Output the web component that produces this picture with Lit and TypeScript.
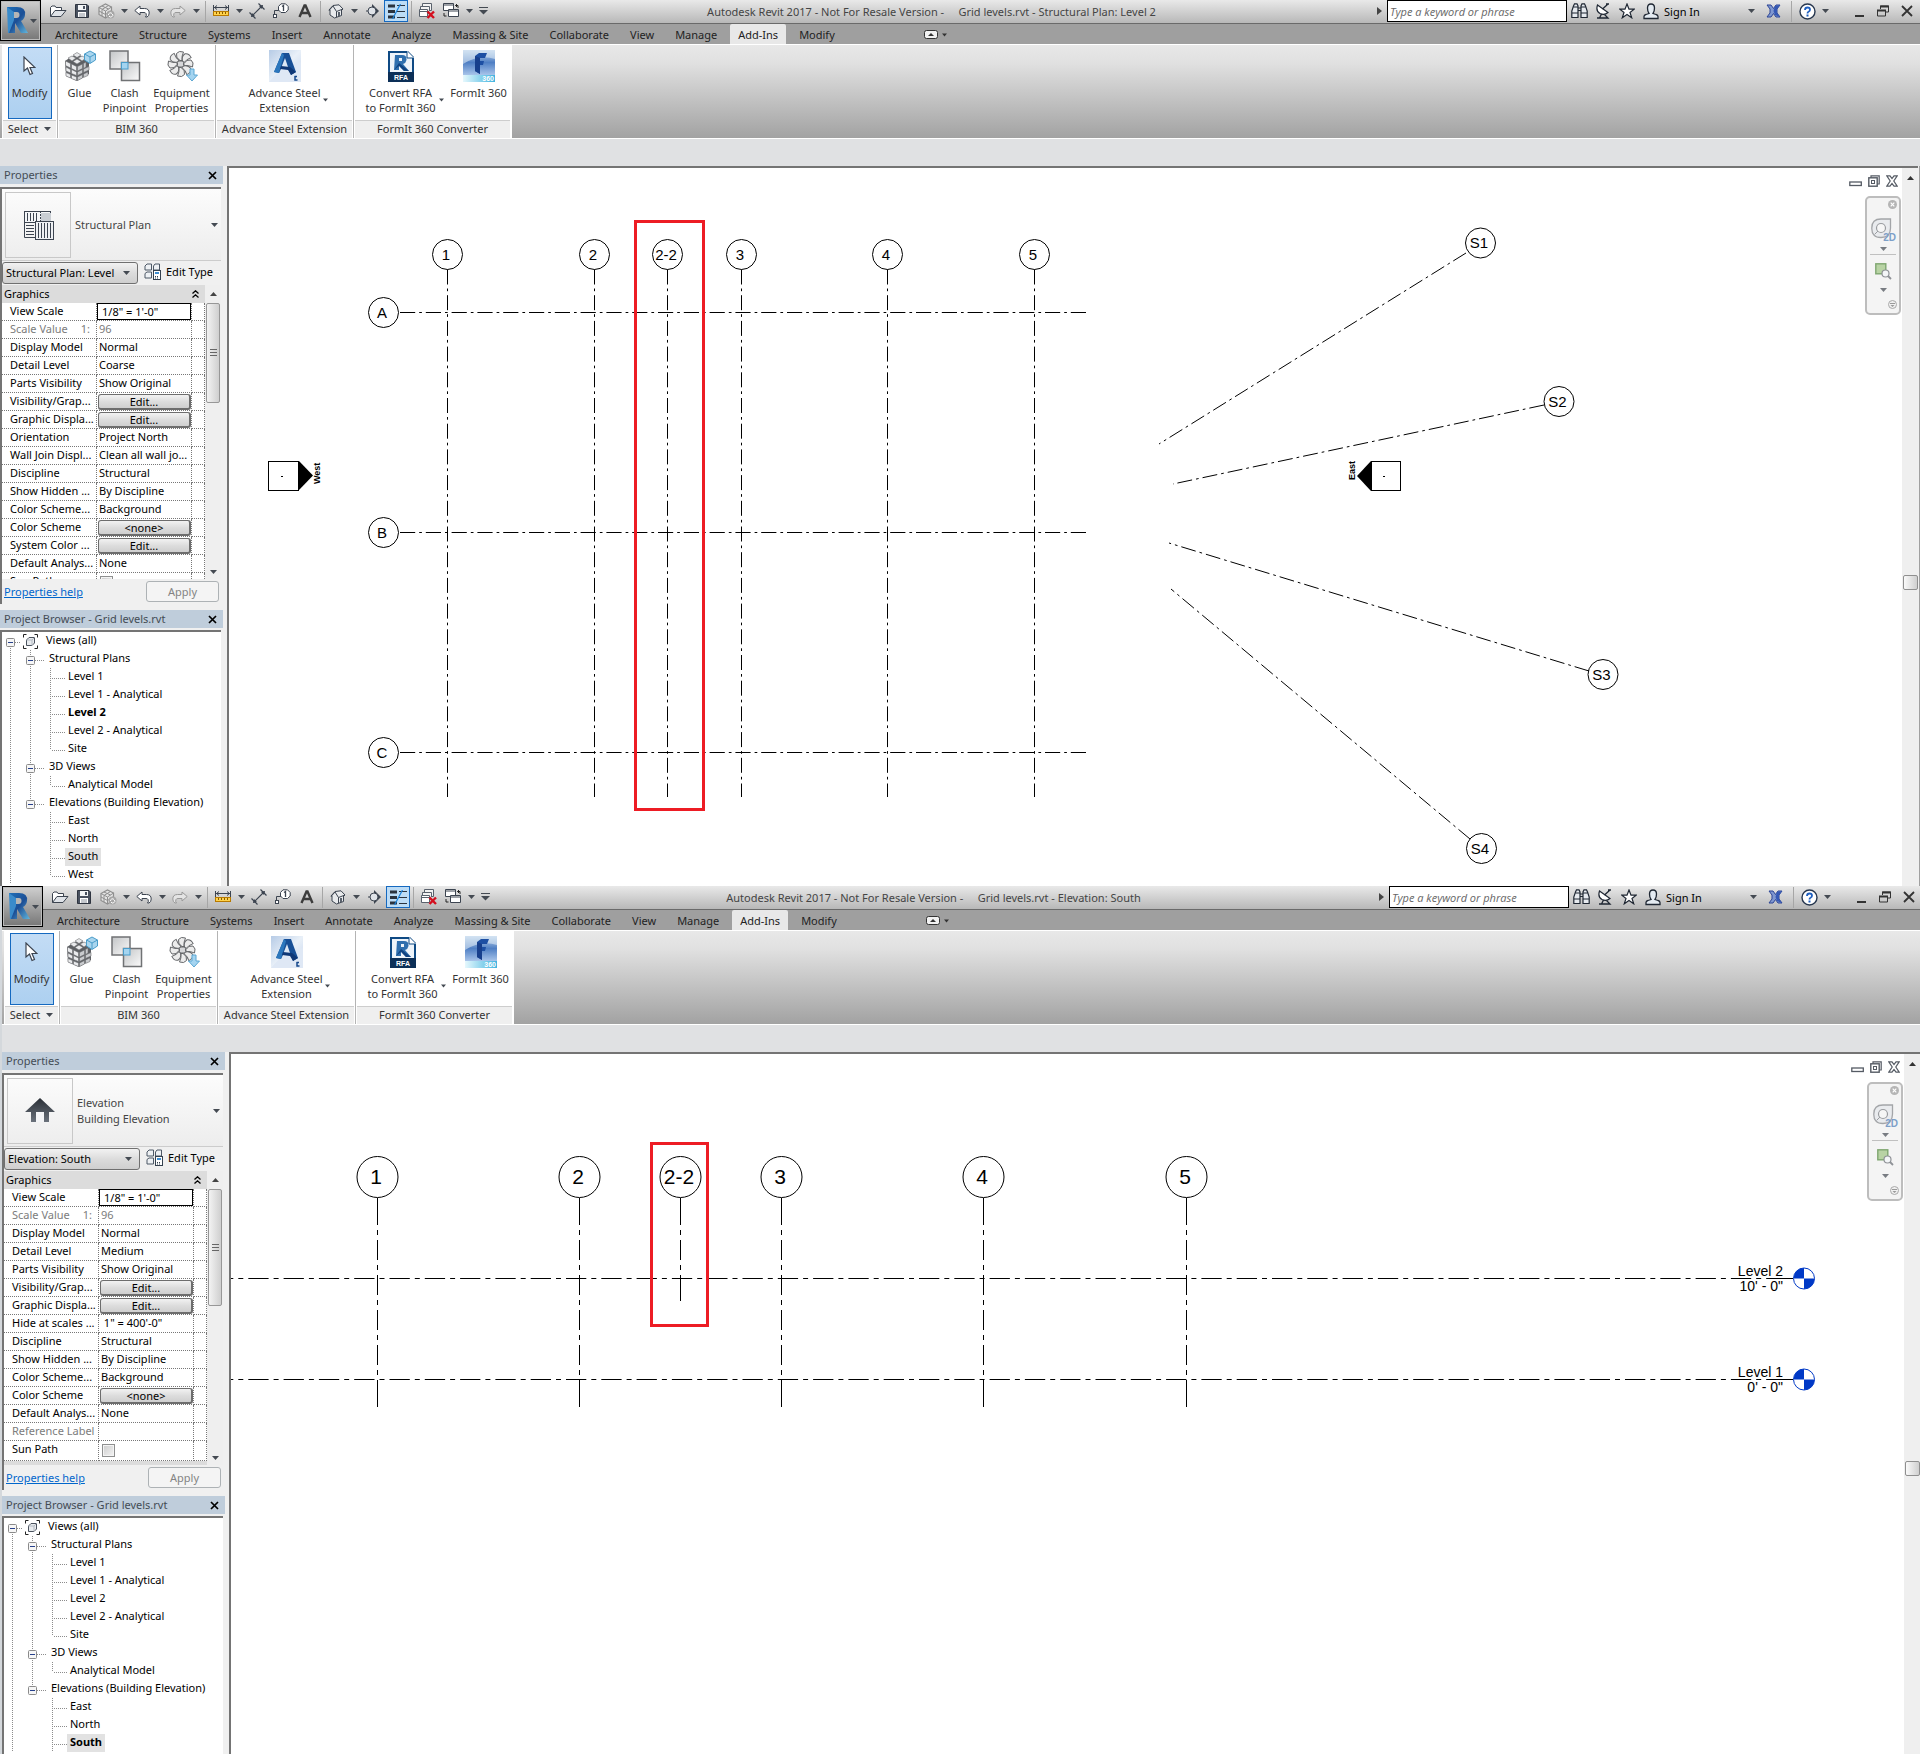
import { LitElement, html, svg, css, nothing, type TemplateResult } from "lit";
import { customElement, property } from "lit/decorators.js";
import { classMap } from "lit/directives/class-map.js";

type Row = { name: string; value?: string; kind?: "text" | "field" | "button" | "check"; dim?: boolean; note?: string };
type Node = { label: string; level: number; current?: boolean; selected?: boolean; last?: boolean };

/* ---------- icons ---------- */

const icon = (w: number, h: number, body: unknown) =>
  html`<svg width=${w} height=${h} viewBox="0 0 ${w} ${h}" aria-hidden="true">${body}</svg>`;

const caret = () => icon(7, 4, svg`<path d="M0 0H7L3.5 4Z" fill="#444a52"/>`);

const icons: Record<string, () => TemplateResult> = {
  open: () => icon(18, 14, svg`<path d="M1.5 12.500V3.500L3 2H6L7 3.500H12.500V6" fill="#fff" stroke="#3c4450"/><path d="M1.500 12.500L6 6.500H17L12 12.500Z" fill="#dfe3e8" stroke="#3c4450"/>`),
  save: () => icon(14, 14, svg`<path d="M.5.500H12L13.500 2V13.500H.500Z" fill="#4a5260" stroke="#2f3540"/><rect x="3" y="1" width="8" height="5" fill="#f4f6f8"/><rect x="8" y="2" width="2" height="3" fill="#4a5260"/><rect x="3" y="8" width="8" height="5" fill="#fff"/><path d="M4 10H10M4 12H10" stroke="#8a919c"/>`),
  sync: () => icon(17, 16, svg`<path d="M1 4.500L7.500 1L13.500 4V11L7.500 15L1 11.500Z" fill="#e4e4e4" stroke="#8f8f8f" stroke-width="1.200"/><path d="M1 4.500L7.500 8L13.500 4M7.500 8V15M4 3L10.500 6M10.500 2.500L4 6.500V13M1 8L7.500 11.500L13.500 7.500" fill="none" stroke="#8f8f8f"/><circle cx="12.500" cy="11.500" r="4" fill="#a6a6a6"/><path d="M10.500 12A2 2 0 0 1 14 10.500M14.500 11A2 2 0 0 1 11 13" fill="none" stroke="#fff"/>`),
  undo: () => icon(16, 13, svg`<path d="M.8 5.500L6 1V3.500H10.500Q15.200 3.500 15.200 8Q15.200 11 13 12H11.500Q13 10.500 12 8.500Q11.500 7.500 10 7.500H6V10Z" fill="#fff" stroke="#3c4450"/>`),
  redo: () => icon(16, 13, svg`<path d="M15.200 5.500L10 1V3.500H5.500Q.8 3.500 .8 8Q.8 11 3 12H4.500Q3 10.500 4 8.500Q4.500 7.500 6 7.500H10V10Z" fill="#e4e4e4" stroke="#999"/>`),
  measure: () => icon(16, 12, svg`<path d="M.5 0V6M15.500 0V6M1 2.500H15M4 .5L1.500 2.500L4 4.500M12 .5L14.500 2.500L12 4.500" fill="none" stroke="#3c4450"/><rect x=".5" y="6.500" width="15" height="4" fill="#ffd24a" stroke="#b87a00"/><path d="M3.500 7V9M6.500 7V9M9.500 7V9M12.500 7V9" stroke="#8a5a00"/>`),
  dim: () => icon(16, 16, svg`<path d="M2.500 13.500L13.500 2.500M9.500 .5L15.500 6.500M.5 9.500L6.500 15.500" fill="none" stroke="#3c4450" stroke-width="1.200"/><path d="M14 2L10 3L13 6ZM2 14L3 10L6 13Z" fill="#3c4450"/>`),
  tag: () => icon(16, 16, svg`<path d="M1.500 13V7.500H6" fill="none" stroke="#3c4450"/><rect x=".5" y="11.500" width="3" height="3" fill="#fff" stroke="#3c4450"/><path d="M8 .8H12.500L15.200 3.500V7L12.500 9.500H8L5.500 7V3.500Z" fill="#fff" stroke="#3c4450"/><path d="M9 3.500L10.500 2.500V8" fill="none" stroke="#3c4450" stroke-width="1.300"/>`),
  text: () => icon(14, 14, svg`<path d="M1.500 13L6.500 1.500H7.500L12.500 13M3.500 9H10.500" fill="none" stroke="#3c3c3c" stroke-width="2.400"/>`),
  house: () => icon(16, 15, svg`<path d="M1 6L5 1.500L11 .8L15 5L13.500 6V11.500L6.500 14L2 11V6Z" fill="#e8eaec" stroke="#3c4450"/><path d="M1 6.500L5 2L8.500 7.500L15 5M8.500 7.500V13" fill="none" stroke="#3c4450"/><rect x="10" y="8" width="2" height="4" fill="#59616c"/>`),
  section: () => icon(13, 14, svg`<path d="M6 0L13 7L6 14Z" fill="#3c4450"/><circle cx="6" cy="7" r="4" fill="#dfe3e8" stroke="#3c4450"/><path d="M0 7H2" stroke="#3c4450"/>`),
  thin: () => icon(17, 15, svg`<path d="M0 2H7M0 7.500H7M0 13H7" stroke="#2b333e" stroke-width="3"/><path d="M9 1.500H17M9 7.500H17M9 13.500H17" stroke="#2b333e"/><path d="M12.500 0L4.500 15" stroke="#1a82dc" stroke-width="1.200"/>`),
  hidden: () => icon(17, 16, svg`<path d="M3.500 4V.5H12.500V7.500H10M1.500 7V3.500H10.500V7" fill="#f2f2f2" stroke="#59616c"/><path d="M.5 6.500H8.500V13.500H.5ZM.5 8.500H8.500" fill="#fff" stroke="#59616c"/><path d="M8.500 8.500L15 15M15 8.500L8.500 15" stroke="#d40f1e" stroke-width="2.400"/>`),
  switch: () => icon(17, 16, svg`<path d="M.5.500H10.500V7.500H.5ZM.5 2H10.500" fill="#fff" stroke="#3c4450"/><path d="M5.500 6.500H15.500V13.500H5.500ZM5.500 8H15.500" fill="#fff" stroke="#3c4450"/><path d="M12.500 2.500H15V5M14 1L12.500 2.500L14 4M1 10V13H3.500" fill="none" stroke="#222"/>`),
  custom: () => icon(9, 8, svg`<path d="M0 .5H9" stroke="#444a52"/><path d="M0 3H9L4.500 7.500Z" fill="#444a52"/>`),
  binoculars: () => icon(17, 16, svg`<path d="M2.500 3L3.500.8H6L7 3V14.500H.8V8ZM14.500 3L13.500.8H11L10 3V14.500H16.200V8Z" fill="#e6eaef" stroke="#1f2733" stroke-width="1.200"/><path d="M1 10H7M10 10H16M7 5H10M7 7.500H10M2.500 4H7M10 4H14.500" stroke="#1f2733"/>`),
  dish: () => icon(14, 16, svg`<path d="M1.500 2Q-.5 8 4 10.500Q8.500 12.500 12 9.500Z" fill="#fff" stroke="#1f2733" stroke-width="1.200"/><path d="M6.500 6L11.500 1.500M10 1H13M3.500 15L5.500 11M1 15H12L8.500 11.500" fill="none" stroke="#1f2733" stroke-width="1.300"/>`),
  star: () => icon(16, 16, svg`<path d="M8 1L10 6.200H15.200L11 9.500L12.700 14.800L8 11.600L3.300 14.800L5 9.500L.8 6.200H6Z" fill="#fff" stroke="#1f2733" stroke-width="1.200"/>`),
  person: () => icon(16, 17, svg`<path d="M1 15.500V13.500Q1 12 3 11.500L6 10.500Q4.500 8.500 4.500 5Q4.500 1 8 1T11.500 5Q11.500 8.500 10 10.500L13 11.500Q15 12 15 13.500V15.500Z" fill="#e4ebf2" stroke="#1f2733" stroke-width="1.300"/>`),
  exchange: () => icon(15, 14, svg`<path d="M1 1H5L7.500 4.500L10 1H14L11 5V9L14 13H10L7.500 9.500L5 13H1L4 9V5Z" fill="#7f97d0" stroke="#2c4596"/><path d="M9 2L14 1L11 5V9L14 13L9 11L7.500 7Z" fill="#3558b4"/>`),
  help: () => icon(17, 17, svg`<circle cx="8.500" cy="8.500" r="7.500" fill="#fff" stroke="#27374f" stroke-width="1.400"/><path d="M6 7Q6 4.500 8.500 4.500T11 6.800Q11 8 9.500 8.800Q8.500 9.300 8.500 10.500" fill="none" stroke="#1f5fc0" stroke-width="1.800"/><rect x="7.500" y="11.500" width="2" height="2" fill="#1f5fc0"/>`),
  min: () => icon(9, 14, svg`<rect y="11" width="9" height="2" fill="#333"/>`),
  restore: () => icon(12, 12, svg`<path d="M3.500 4V1H11.500V7H8.500" fill="none" stroke="#333"/><path d="M3 1.500H12M0 5.500H9" stroke="#333" stroke-width="2"/><path d="M.5 5V11H8.500V5" fill="none" stroke="#333"/>`),
  close: () => icon(12, 12, svg`<path d="M1 1L11 11M11 1L1 11" stroke="#333" stroke-width="1.800"/>`),
  x: () => icon(9, 9, svg`<path d="M1 1L8 8M8 1L1 8" stroke="#000" stroke-width="1.700"/>`),
  cursor: () => icon(13, 20, svg`<path d="M1 1V15L4.500 12L7 18.500L9.500 17.500L7 11.500H12Z" fill="#fff" stroke="#3c4450" stroke-width="1.200"/>`),
  glue: () => icon(32, 32, svg`
    <path d="M1 11L7 7L13 4L19 7L25 12V24L13 31L2 26Z" fill="#5d5f63"/>
    <g fill="#e9eaec" stroke="#6e7074" stroke-width=".6">
      <path d="M9 5L13 2.500L17 5L13 7.500ZM4 8L8 6L12 8L8 11ZM14 8L18 6L22 8L18 11ZM9 11.500L13 9L17 11.500L13 14Z"/>
      <path d="M1.500 11L6.500 13.500V18L1.500 15.500ZM7.500 14L12.500 16.500V21L7.500 18.500ZM2 17L6.500 19.500V23L2 21ZM7.500 19.500L12.500 22V25.500L7.500 23.500ZM2 22.500L6.500 24.500V28L2 26ZM7.500 25L12.500 27V30.500L7.500 28.500Z"/>
      <path d="M13.500 16.500L18.500 14V18.500L13.500 21ZM19.500 13.500L22 12V17L19.500 18.500ZM13.500 22L18.500 19.500V23L13.500 25.500ZM19.500 19L25 16.500V20L19.500 22.500ZM13.500 27L18.500 24.500V28L13.500 30.500ZM19.500 24L24 22V25.500L19.500 27.500Z" fill="#c9cbce"/>
    </g>
    <path d="M20.500 4L26 1L31.500 4V10L26 13.500L20.500 10Z" fill="#a9d5ee" stroke="#4a9cc9"/><path d="M20.500 4L26 7L31.500 4M26 7V13" fill="none" stroke="#4a9cc9"/>`),
  clash: () => icon(32, 32, svg`<defs><linearGradient id="m" x1="0" y1="0" x2="1" y2="1"><stop offset="0" stop-color="#c2c4c6"/><stop offset="1" stop-color="#fbfbfb"/></linearGradient></defs>
    <rect x="1" y="1" width="18" height="18" fill="url(#m)" stroke="#707274" stroke-width="1.500"/><rect x="12.500" y="12.500" width="18" height="18" fill="url(#m)" stroke="#707274" stroke-width="1.500"/><rect x="12.500" y="12.500" width="6.500" height="6.500" fill="#a4d4f0" stroke="#4a9cc9"/>`),
  equip: () => icon(32, 32, svg`<g fill="#ececec" stroke="#66686b" stroke-width="1">${[0, 45, 90, 135, 180, 225, 270, 315].map(
      (a) => svg`<path d="M14 10.500Q9.500 8 10.500 3.500Q13 .2 17.500 2Q15.500 6 16 10.500Z" transform="rotate(${a} 14.500 14)"/>`)}</g>
    <rect x="11.500" y="11" width="6" height="6" rx="1.500" fill="#d6d7d9" stroke="#66686b"/>
    <path d="M24 19H28V25H31.500L26 31L20.500 25H24Z" fill="#a4d4f0" stroke="#5aa6d2"/>`),
  steel: () => icon(32, 32, svg`<defs><linearGradient id="s" x1="0" y1="0" x2="1" y2="1"><stop offset="0" stop-color="#b6cbe6"/><stop offset=".5" stop-color="#e9f0f8"/><stop offset="1" stop-color="#c3d3ec"/></linearGradient></defs>
    <rect width="32" height="32" fill="url(#s)"/><path d="M0 32Q14 14 32 12V32Z" fill="#dfe8f5"/>
    <path d="M5 22L13 3H20L27 22L22 25L20 19H12L10 23Z" fill="#174f96"/><path d="M16 8L12.500 17H19Z" fill="#dce7f4"/><path d="M5 22L13 3L15 5L10 23Z" fill="#2b77bd"/><path d="M12 16L21 17L27 22L22 25L19 20L11 19Z" fill="#0f3877"/>
    <path d="M25.500 26.500H28M26 26V30H28.500" fill="none" stroke="#16488c" stroke-width="1.500"/>`),
  rfa: () => icon(26, 31, svg`<path d="M0 0H20L26 6V31H0Z" fill="#0f4a84"/><path d="M2 2H19L24 7V21H2Z" fill="#eef4fa"/><path d="M19 0L26 7H19Z" fill="#fff"/><path d="M19 1V7H25" fill="none" stroke="#0f4a84"/>
    <path d="M7 4H14Q19 4 18.500 9Q18 12 15 13L21 20H16L11 14V19H6Z" fill="#2f6fae"/><path d="M11 7H14V10H11Z" fill="#eef4fa"/><path d="M6 19L11 12L21 20H16L11 15Z" fill="#0f4382"/><rect y="21" width="26" height="10" fill="#0c2f57"/>
    <text x="13" y="29" text-anchor="middle" font-family="Liberation Sans, sans-serif" font-size="7" font-weight="700" fill="#fff">RFA</text>`),
  formit: () => icon(32, 32, svg`<defs><linearGradient id="f" x1="0" y1="0" x2="0" y2="1"><stop offset="0" stop-color="#c5d9ee"/><stop offset=".5" stop-color="#4f7fc4"/><stop offset="1" stop-color="#a8c4ea"/></linearGradient><linearGradient id="f2"><stop offset="0" stop-color="#e6f8fd"/><stop offset="1" stop-color="#3fb3df"/></linearGradient></defs>
    <rect width="32" height="25" fill="url(#f)"/><path d="M0 14Q16 4 32 9V0H0Z" fill="#dce9f5" opacity=".6"/><rect y="25" width="32" height="7" fill="url(#f2)"/>
    <path d="M12 6L16 3H24L22 8H17V11H21L20 15H17V24L12 21Z" fill="#1d4fa3"/><path d="M12 6L17 8V24L12 21Z" fill="#173f8c"/>
    <text x="31" y="31" text-anchor="end" font-family="Liberation Sans, sans-serif" font-size="7" font-weight="700" fill="#fff">360</text>`),
  plan: () => icon(32, 32, svg`<rect x="2.500" y="2.500" width="26" height="11" fill="#f4f6f8" stroke="#3c4450"/><rect x="19" y="4" width="10" height="9" fill="#c9ced4"/>
    <path d="M5.500 4V12M8.500 4V12M11.500 4V12M14.500 4V12" stroke="#3c4450"/><path d="M2.500 13V28.500H14M4 16.500H12M4 19.500H12M4 22.500H12M4 25.500H12" fill="none" stroke="#3c4450"/>
    <rect x="13.500" y="12.500" width="18" height="18" fill="#eef0f3" stroke="#3c4450"/><path d="M16.500 14V29M19.500 14V29M22.500 14V29M25.500 14V29M28.500 14V29" stroke="#3c4450"/><path d="M18.500 2V12" stroke="#3c4450" stroke-dasharray="2 1"/>`),
  elevation: () => icon(32, 32, svg`<defs><linearGradient id="h" x1="0" y1="0" x2="0" y2="1"><stop offset="0" stop-color="#2a2f36"/><stop offset="1" stop-color="#6a717b"/></linearGradient></defs>
    <path d="M16 3L31 17H25V27H7V17H1Z" fill="url(#h)"/><rect x="12" y="17" width="8" height="10" fill="#f3f4f6"/>`),
  editType: () => icon(17, 17, svg`<path d="M1 3L3 1H7.500V7H1ZM9.500 3L11 1H15.500V7H9.500ZM1 10.500L3 9H7.500V15H1Z" fill="#eef1f4" stroke="#4d5866"/><rect x="9.500" y="7.500" width="7" height="9" fill="#fff" stroke="#34414f"/><rect x="11" y="9" width="4" height="2" fill="#3f8ed0"/><path d="M11 13.500H15M11 15H15" stroke="#34414f" stroke-dasharray="1 1"/>`),
  views: () => icon(15, 15, svg`<path d="M.5 3.500V.5H3.500M11.500.500H14.500V3.500M14.500 11.500V14.500H11.500M3.500 14.500H.5V11.500" fill="none" stroke="#222"/><path d="M3.500 6L6 3.500H11.500V9L9 11.500H3.500Z" fill="#e8ebee" stroke="#4a525e"/><path d="M3.500 6H9V11.500M9 6L11.500 3.500" fill="none" stroke="#b4bac2"/>`),
  wheel: () => icon(26, 25, svg`<path d="M10 1H19.500V10Q19.500 19.500 10 19.500T.8 10Q.8 1 10 1Z" fill="#e9ebee" stroke="#a3a5a8" stroke-width="1.300"/><circle cx="10" cy="10" r="4.500" fill="#f6f6f6" stroke="#9a9ca0" stroke-width="1.200"/><path d="M3.500 16.500L7 13" stroke="#9a9ca0"/>
    <text x="25" y="23" text-anchor="end" font-family="Open Sans, sans-serif" font-size="10" font-weight="700" fill="#7d9fc8">2D</text>`),
  zoom: () => icon(17, 17, svg`<rect x=".8" y=".8" width="10" height="10" fill="#b8d3a4" stroke="#7fa670" stroke-width="1.400"/><circle cx="10.500" cy="10.500" r="3.500" fill="#f4f6f8" stroke="#8f9297" stroke-width="1.200"/><path d="M13 13L16 16" stroke="#8f9297" stroke-width="1.800"/>`),
  navClose: () => icon(9, 9, svg`<circle cx="4.500" cy="4.500" r="4.500" fill="#b5b5b5"/><path d="M2.700 2.700L6.300 6.300M6.300 2.700L2.700 6.300" stroke="#fff" stroke-width="1.200"/>`),
  navMenu: () => icon(9, 9, svg`<circle cx="4.500" cy="4.500" r="4" fill="#f0f0f0" stroke="#a8a8a8"/><path d="M2 3.500H7" stroke="#999"/><path d="M2.500 5H6.500L4.500 7Z" fill="#999"/>`),
  docMin: () => icon(13, 12, svg`<rect x=".8" y="7" width="11.500" height="3.500" fill="#fff" stroke="#555b64" stroke-width="1.300"/>`),
  docRestore: () => icon(12, 12, svg`<path d="M3 3V.8H11.200V9H9" fill="none" stroke="#555b64" stroke-width="1.200"/><rect x=".8" y="2.800" width="8.400" height="8.400" fill="#fff" stroke="#555b64" stroke-width="1.400"/><rect x="3.500" y="5.500" width="3" height="3" fill="none" stroke="#555b64"/>`),
  docClose: () => icon(12, 12, svg`<path d="M.8 .8H4L6 3.500L8 .8H11.200L7.800 6L11.200 11.200H8L6 8.500L4 11.200H.8L4.200 6Z" fill="#fff" stroke="#555b64" stroke-width="1.200"/>`),
  chevrons: () => icon(7, 8, svg`<path d="M.5 3.500L3.500.800L6.500 3.500M.5 7.500L3.500 4.800L6.500 7.500" fill="none" stroke="#000" stroke-width="1.300"/>`),
  panelToggle: () => icon(24, 9, svg`<rect x=".5" y=".5" width="13" height="8" rx="2" fill="#f2f2f2" stroke="#333"/><path d="M4 6L7 3L10 6Z" fill="#333"/><path d="M18 3.500H23L20.500 6.500Z" fill="#333"/>`),
};

const glyph = (name: string) => (name === "caret" ? caret() : icons[name]());

/* ---------- data ---------- */

const quickTools: [string, string][] = [
  ["open", "Open"], ["save", "Save"], ["sync", "Synchronize"], ["caret", "Synchronize options"],
  ["undo", "Undo"], ["caret", "Undo history"], ["redo", "Redo"], ["caret", "Redo history"], ["sep", ""],
  ["measure", "Measure"], ["caret", "Measure options"], ["dim", "Aligned dimension"], ["tag", "Tag by category"],
  ["text", "Text"], ["sep", ""], ["house", "Default 3D view"], ["caret", "3D view options"],
  ["section", "Section"], ["thin", "Thin lines"], ["sep", ""], ["hidden", "Close hidden windows"],
  ["switch", "Switch windows"], ["caret", "Window list"], ["custom", "Customize"],
];

const tabs = ["Architecture", "Structure", "Systems", "Insert", "Annotate", "Analyze", "Massing & Site",
  "Collaborate", "View", "Manage", "Add-Ins", "Modify"];

const planRows: Row[] = [
  { name: "View Scale", value: "1/8\" = 1'-0\"", kind: "field" },
  { name: "Scale Value", note: "1:", value: "96", dim: true },
  { name: "Display Model", value: "Normal" },
  { name: "Detail Level", value: "Coarse" },
  { name: "Parts Visibility", value: "Show Original" },
  { name: "Visibility/Grap...", value: "Edit...", kind: "button" },
  { name: "Graphic Displa...", value: "Edit...", kind: "button" },
  { name: "Orientation", value: "Project North" },
  { name: "Wall Join Displ...", value: "Clean all wall jo..." },
  { name: "Discipline", value: "Structural" },
  { name: "Show Hidden ...", value: "By Discipline" },
  { name: "Color Scheme...", value: "Background" },
  { name: "Color Scheme", value: "<none>", kind: "button" },
  { name: "System Color ...", value: "Edit...", kind: "button" },
  { name: "Default Analys...", value: "None" },
  { name: "Sun Path", kind: "check" },
];

const elevationRows: Row[] = [
  ...planRows.slice(0, 3),
  { name: "Detail Level", value: "Medium" },
  ...planRows.slice(4, 7),
  { name: "Hide at scales ...", value: "\u00a01\" = 400'-0\"" },
  ...planRows.slice(9, 13),
  planRows[14],
  { name: "Reference Label", value: "", dim: true },
  planRows[15],
];

const tree = (current: string, selected: string, count: number): Node[] =>
  ([
    ["Views (all)", 0], ["Structural Plans", 1], ["Level 1", 2], ["Level 1 - Analytical", 2], ["Level 2", 2],
    ["Level 2 - Analytical", 2], ["Site", 2, true], ["3D Views", 1], ["Analytical Model", 2, true],
    ["Elevations (Building Elevation)", 1, true], ["East", 2], ["North", 2], ["South", 2], ["West", 2, true],
  ] as [string, number, boolean?][]).slice(0, count).map(([label, level, last]) => ({
    label, level, last, current: label === current, selected: label === selected,
  }));

/* ---------- drawings, in window coordinates ---------- */

const bubble = (x: number, y: number, r: number, label: string) =>
  svg`<circle cx=${x} cy=${y} r=${r} class="thin"/><text x=${x - 1.5} y=${y + Math.round(r / 3)} text-anchor="middle" class=${r > 16 ? "big" : "small"}>${label}</text>`;

const planDrawing = () => svg`
  ${([[447, "1"], [594, "2"], [667, "2-2"], [741, "3"], [887, "4"], [1034, "5"]] as [number, string][]).map(
    ([x, t]) => svg`<path d="M${x}.5 269.500V797" class="thin plan-dash"/>${bubble(x + 0.5, 254.5, 15, t)}`)}
  ${([[313, "A"], [533, "B"], [753, "C"]] as [number, string][]).map(
    ([y, t]) => svg`<path d="M400 ${y - 1}.5H1086" class="thin row-dash"/>${bubble(383.5, y - 0.5, 15, t)}`)}
  ${([[1466, 253, 1159, 444, 1480.5, 243, "S1"], [1544, 405, 1173, 484, 1559, 401.5, "S2"],
    [1589, 671, 1169, 543, 1603, 674.5, "S3"], [1470, 839, 1171, 589, 1481.5, 848.5, "S4"]] as [number, number, number, number, number, number, string][]).map(
    ([x1, y1, x2, y2, cx, cy, t]) => svg`<path d="M${x1} ${y1}L${x2} ${y2}" class="thin plan-dash"/>${bubble(cx, cy, 15, t)}`)}
  <rect x="268.500" y="461.500" width="30" height="29" class="thin"/><path d="M299 461L313 475.500L299 490Z"/><rect x="281" y="476" width="2" height="1"/>
  <text class="marker" transform="translate(320 484) rotate(-90)">West</text>
  <rect x="1371.500" y="461.500" width="29" height="29" class="thin"/><path d="M1371 461L1357 476L1371 491Z"/><rect x="1383" y="476" width="2" height="1"/>
  <text class="marker" transform="translate(1355 480) rotate(-90)">East</text>
  <rect x="635.500" y="221.500" width="68" height="588" class="mark"/>`;

const elevationDrawing = () => svg`
  ${([[377, "1", 521], [579, "2", 521], [680, "2-2", 415], [781, "3", 521], [983, "4", 521], [1186, "5", 521]] as [number, string, number][]).map(
    ([x, t, end]) => svg`<path d="M${x - 1.5} 312V320M${x - 1.5} ${end - 22}V${end}" class="thin"/><path d="M${x - 1.5} 319V${end}" class="thin column-dash"/>${bubble(x - 1.5, 291, 20.5, t)}`)}
  ${([[393, "Level 2", "10' - 0\""], [494, "Level 1", "0' - 0\""]] as [number, string, string][]).map(
    ([y, name, height]) => svg`<path d="M229 ${y - 1}.5H1791" class="thin level-dash" stroke-dashoffset="18"/><path d="M1766 ${y - 1}.5H1791" class="thin"/>
      <text x="1781" y=${y - 3} text-anchor="end" class="level">${name}</text><text x="1781" y=${y + 12} text-anchor="end" class="level">${height}</text>
      <circle cx="1802" cy=${y - 0.5} r="10.500" class="head"/><path d="M1802 ${y - 0.5}V${y - 11}A10.500 10.500 0 0 0 1791.500 ${y - 0.5}ZM1802 ${y - 0.5}V${y + 10}A10.500 10.500 0 0 0 1812.500 ${y - 0.5}Z" class="fill"/>`)}
  <rect x="649.500" y="257.500" width="56" height="182" class="mark"/>`;

/* ---------- components ---------- */

const reset = css`
  * { box-sizing: border-box; }
  button { font: inherit; color: inherit; background: none; border: 0; padding: 0; margin: 0; display: inline-flex; align-items: center; justify-content: center; }
  svg { display: block; flex: none; }
`;

@customElement("revit-header")
class RevitHeader extends LitElement {
  @property() document = "";

  static styles = [reset, css`
    :host { display: block; color: #333; font: 11px/15px "Noto Sans", "Open Sans", sans-serif; }
    .top { display: grid; grid-template-columns: 41px 1fr; background: #9f9f9f; }
    .app { grid-row: span 2; align-self: start; height: 41px; border: 1px solid #000; box-shadow: inset 0 0 0 1px #bbb; background: linear-gradient(#cfcfcf, #777); gap: 1px; }
    .title { display: flex; align-items: center; height: 24px; min-width: 0; border-bottom: 1px solid #6a6a6a; background: linear-gradient(#e9e9e9, #b8b8b8); padding: 0 1px 1px 5px; }
    .tool { width: 24px; height: 22px; flex: none; }
    .tool.caret { width: 12px; }
    .tool.custom { width: 16px; }
    .tool.exchange { margin: 0 3px 0 4px; }
    .tool.thin { background: #bcdcf6; border: 1px solid #1569c0; }
    .sep { width: 7px; height: 21px; flex: none; background: linear-gradient(90deg, transparent 3px, #a6a6a6 3px 4px, transparent 4px); }
    .caption { flex: 1; text-align: center; white-space: pre; overflow: hidden; margin: 0; font: inherit; color: #444; }
    .gap { width: 16px; flex: none; }
    .nib { width: 0; height: 0; border: 4px solid transparent; border-left: 5px solid #444; border-right: 0; margin: 0 5px; }
    .search { width: 180px; height: 22px; border: 1px solid #000; background: #fff; padding: 0 2px; font: italic 11px "Open Sans", sans-serif; }
    .search::placeholder { color: #666; opacity: 1; }
    .sign { width: 82px; flex: none; justify-content: flex-start; padding-left: 1px; color: #000; }
    .tabs { display: flex; height: 20px; padding-left: 6px; gap: 5px; align-items: stretch; }
    .tab { padding: 0 8px; color: #222; }
    .tab.on { background: #e8e8e8; border-radius: 2px 2px 0 0; }
    .toggle { margin-left: 76px; }
    .ribbon { display: flex; height: 95px; padding-left: 2px; border-top: 1px solid #fff; border-bottom: 1px solid #fff; background: linear-gradient(#e8e8e8, #e0e0e0 20%, #a2a2a2); }
    .panel { display: flex; flex-direction: column; background: #fff; border-right: 1px solid #b4b4b4; padding: 0 1px; }
    .panel.select { width: 56px; } .panel.bim { width: 158px; } .panel.steel { width: 138px; } .panel.formit { width: 158px; border-right-color: #fff; }
    .body { flex: 1; display: flex; justify-content: center; padding-top: 2px; }
    .name { height: 18px; padding-bottom: 2px; background: #efefef; border-top: 1px solid #cdcdcd; display: flex; align-items: center; justify-content: center; gap: 6px; white-space: nowrap; }
    .big { flex-direction: column; justify-content: flex-start; padding-top: 3px; gap: 3px; flex: none; }
    .big .pic { height: 32px; display: flex; align-items: center; }
    .big .pic svg { margin: auto; }
    .big.w1 { width: 40px; } .big.w2 { width: 50px; } .big.w3 { width: 64px; } .big.w4 { width: 92px; }
    .big.on { width: 44px; height: 72px; background: linear-gradient(#c3dcf5, #add0f0); border: 1px solid #1569c0; padding-top: 2px; }
    .lines { display: flex; align-items: center; gap: 3px; white-space: pre; text-align: center; }
    .lines svg { width: 5px; margin-right: -8px; }
    .options { height: 27px; background: #e0e1e3; }
  `];

  private big(name: string, label: string, cls: string, menu = false) {
    return html`<button class="big ${cls}"><span class="pic">${glyph(name)}</span><span class="lines">${label}${menu ? caret() : nothing}</span></button>`;
  }

  private tool(name: string, label: string) {
    return name === "sep" ? html`<span class="sep"></span>` : html`<button class="tool ${name}" aria-label=${label}>${glyph(name)}</button>`;
  }

  render() {
    return html`
      <div class="top">
        <button class="app" aria-label="Application menu">
          <svg width="24" height="30" viewBox="0 0 24 30" aria-hidden="true">
            <defs><linearGradient id="r" x1="0" y1="0" x2="1" y2="1"><stop offset="0" stop-color="#1f6fb8"/><stop offset=".5" stop-color="#1c4f96"/><stop offset="1" stop-color="#62b6dc"/></linearGradient></defs>
            <path d="M2 1H12Q21 1 20 9Q19.500 13 16 15L23 27H16L10 17V27H3V6Z" fill="url(#r)"/><path d="M9 6H12Q14.500 6 14.500 9T11.500 12H9Z" fill="#b5b5b5"/><path d="M2 1L9 6V14L4 27H3Z" fill="#3a8bcb"/>
          </svg>${caret()}
        </button>
        <div class="title">
          ${quickTools.map(([n, l]) => this.tool(n, l))}
          <h1 class="caption">Autodesk Revit 2017 - Not For Resale Version -     ${this.document}</h1>
          <span class="nib"></span>
          <input class="search" type="search" aria-label="Search help" placeholder="Type a keyword or phrase" />
          ${this.tool("binoculars", "Search")}${this.tool("dish", "Communication center")}${this.tool("star", "Favorites")}${this.tool("person", "Account")}
          <button class="sign">Sign In</button>
          ${this.tool("caret", "Account options")}${this.tool("exchange", "Exchange apps")}${this.tool("sep", "")}
          ${this.tool("help", "Help")}${this.tool("caret", "Help options")}<span class="gap"></span>
          ${this.tool("min", "Minimize")}${this.tool("restore", "Restore")}${this.tool("close", "Close")}
        </div>
        <nav class="tabs">
          ${tabs.map((t) => html`<button class=${classMap({ tab: true, on: t === "Add-Ins" })}>${t}</button>`)}
          <button class="toggle" aria-label="Minimize ribbon">${glyph("panelToggle")}</button>
        </nav>
      </div>
      <div class="ribbon">
        <section class="panel select"><div class="body">${this.big("cursor", "Modify", "on")}</div><div class="name">Select ${caret()}</div></section>
        <section class="panel bim"><div class="body">${this.big("glue", "Glue", "w1")}${this.big("clash", "Clash\nPinpoint", "w2")}${this.big("equip", "Equipment\nProperties", "w3")}</div><div class="name">BIM 360</div></section>
        <section class="panel steel"><div class="body">${this.big("steel", "Advance Steel\nExtension", "w4", true)}</div><div class="name">Advance Steel Extension</div></section>
        <section class="panel formit"><div class="body">${this.big("rfa", "Convert RFA\nto FormIt 360", "w4", true)}${this.big("formit", "FormIt 360", "w3")}</div><div class="name">FormIt 360 Converter</div></section>
      </div>
      <div class="options"></div>`;
  }
}

@customElement("revit-sidebar")
class RevitSidebar extends LitElement {
  @property() view = "plan";

  static styles = [reset, css`
    :host { display: block; background: #f0f0f0; padding-right: 4px; font: 11px/16px "Noto Sans", "Open Sans", sans-serif; color: #000; }
    .bar { display: flex; align-items: center; justify-content: space-between; height: 18px; padding: 0 6px 0 4px; background: #bfcddb; color: #444c55; }
    .bar h2 { font: inherit; margin: 0; }
    .box { margin: 3px 2px 6px 0; border: 2px solid #747474; border-width: 2px 0 0 2px; }
    .type { display: flex; align-items: center; height: 72px; padding: 2px 2px 2px 3px; gap: 4px; color: #444; border-bottom: 1px solid #ccc; background: linear-gradient(#fcfcfc, #ededed); }
    .thumb { width: 66px; height: 66px; border: 1px solid #c8c8c8; display: grid; place-items: center; }
    .kind { flex: 1; white-space: pre; text-align: left; }
    .type button { width: 10px; height: 20px; }
    .row { display: flex; align-items: center; height: 24px; gap: 6px; }
    .row select { width: 136px; height: 22px; font: inherit; color: #000; padding: 0 18px 1px 3px; border: 1px solid #707070; border-radius: 3px; appearance: none; background: linear-gradient(#f2f2f2, #dcdcdc 50%, #cfcfcf); }
    .combo { display: flex; align-items: center; }
    .combo svg { margin: 0 8px 0 -15px; pointer-events: none; }
    .row button { gap: 5px; padding-bottom: 3px; }
    .props { display: flex; height: 294px; overflow: hidden; }
    .list { flex: 1; background: #fff; min-width: 0; }
    .group { display: flex; justify-content: space-between; align-items: center; height: 18px; padding: 0 6px 1px 2px; background: #dcdcdc; font: inherit; margin: 0; }
    table { width: 100%; border-collapse: separate; border-spacing: 0; table-layout: fixed; }
    .c1, .c2 { width: 95px; }
    th, td { height: 18px; padding: 0; border: 1px dotted #777; border-width: 0 1px 1px 0; font-weight: 400; text-align: left; vertical-align: top; line-height: 15px; white-space: nowrap; overflow: hidden; }
    th { padding-left: 8px; }
    td { padding-left: 2px; }
    td.tight { padding: 0; }
    td.tight > * { display: flex; }
    .dim { color: #7c7c7c; }
    .note { margin-left: 13px; }
    .field { width: 94px; height: 17px; border: 1px solid #000; padding: 0 4px 1px; font: inherit; background: #fff; }
    .edit { width: 93px; height: 16px; margin: 1px 0 0 1px; border: 1px solid #6d6d6d; border-width: 1px 2px 2px 1px; border-radius: 3px; background: linear-gradient(#f2f2f2, #ddd 50%, #cfcfcf); }
    .check { appearance: none; width: 13px; height: 13px; margin: 3px; border: 1px solid #8e8f8f; background: linear-gradient(135deg, #ccc, #f4f4f4); box-shadow: inset 0 0 0 1px #f4f4f4; }
    .scroll { width: 16px; display: flex; flex-direction: column; align-items: center; padding: 7px 0 5px; background: #efefef; }
    .thumbbar { width: 14px; height: 100px; margin-top: 7px; border: 1px solid #979797; border-radius: 2px; background: linear-gradient(90deg, #f3f3f3, #cfcfcf); display: grid; place-items: center; }
    .thumbbar.long { height: 117px; }
    .space { flex: 1; }
    .foot { display: flex; align-items: center; justify-content: space-between; height: 25px; padding: 0 2px; }
    .foot a { color: #0066cc; }
    .foot button { width: 73px; height: 21px; border: 1px solid #adb2b5; border-radius: 3px; background: #f4f4f4; color: #838383; }
    .tree { list-style: none; margin: 2px 0 0; padding: 0 0 2px; border-top: 2px solid #747474; border-left: 2px solid #747474; margin-right: 2px; background: #fff; }
    .node { display: flex; align-items: center; height: 18px; white-space: nowrap; }
    .node .pic { margin: 0 5px 0 2px; }
    .label { padding: 0 3px 2px; line-height: 16px; }
    .sel { background: #e2e2e2; }
    .cur { font-weight: 700; }
  `];

  private value(r: Row) {
    if (r.kind === "field") return html`<input class="field" aria-label=${r.name} .value=${r.value ?? ""} />`;
    if (r.kind === "button") return html`<button class="edit" aria-label="${r.name} ${r.value}">${r.value}</button>`;
    if (r.kind === "check") return html`<input class="check" type="checkbox" aria-label=${r.name} />`;
    return r.value;
  }

  private guide(n: Node, first: boolean) {
    const w = [19, 44, 63][n.level];
    const bx = n.level === 0 ? 4 : 24;
    return html`<svg width=${w} height="18" viewBox="0 0 ${w} 18" aria-hidden="true">
      <g stroke="#8c8c8c" stroke-dasharray="1 1" fill="none">
        <path d="M8.500 ${first ? 14 : 0}V18"/>
        ${n.level === 1 ? svg`<path d="M28.500 0V${n.last ? 9 : 18}M33 10.500H42"/>` : nothing}
        ${n.level === 2 ? svg`<path d="M48.500 0V${n.last ? 10 : 18}M50 10.500H63"/>` : nothing}
        ${n.level === 2 && !this.lastBranch(n) ? svg`<path d="M28.500 0V18"/>` : nothing}
        ${n.level === 0 ? svg`<path d="M13 10.500H19"/>` : nothing}
      </g>
      ${n.level < 2 ? svg`<rect x="${bx}.5" y="6.500" width="8" height="8" rx="1" fill="#f6f6f6" stroke="#8a8a8a"/><path d="M${bx + 2} 10.500H${bx + 7}" stroke="#26408b"/>` : nothing}
    </svg>`;
  }

  private lastBranch(n: Node) {
    return ["East", "North", "South", "West"].includes(n.label);
  }

  render() {
    const plan = this.view === "plan";
    const rows = plan ? planRows : elevationRows;
    const nodes = plan ? tree("Level 2", "South", 14) : tree("South", "South", 13);
    return html`
      <div class="bar"><h2>Properties</h2><button aria-label="Close properties">${glyph("x")}</button></div>
      <div class="box">
        <div class="type"><span class="thumb">${glyph(plan ? "plan" : "elevation")}</span><span class="kind">${plan ? "Structural Plan" : "Elevation\nBuilding Elevation"}</span><button aria-label="Change type">${caret()}</button></div>
        <div class="row">
          <span class="combo"><select aria-label="View"><option>${plan ? "Structural Plan: Level" : "Elevation: South"}</option></select>${caret()}</span>
          <button>${glyph("editType")}Edit Type</button>
        </div>
        <div class="props">
          <div class="list">
            <h3 class="group">Graphics ${glyph("chevrons")}</h3>
            <table>
              <colgroup><col class="c1" /><col class="c2" /><col /></colgroup>
              <tbody>
                ${rows.map((r) => html`<tr class=${classMap({ dim: !!r.dim })}>
                  <th scope="row">${r.name}${r.note ? html`<span class="note">${r.note}</span>` : nothing}</th>
                  <td class=${classMap({ tight: !!r.kind })}>${this.value(r)}</td><td></td></tr>`)}
              </tbody>
            </table>
            ${plan ? nothing : html`<h3 class="group">Extents ${glyph("chevrons")}</h3>`}
          </div>
          <div class="scroll">
            ${icon(7, 4, svg`<path d="M0 4H7L3.500 0Z" fill="#444"/>`)}
            <span class=${classMap({ thumbbar: true, long: !plan })}>${icon(7, 8, svg`<path d="M0 .5H7M0 3.500H7M0 6.500H7" stroke="#666"/>`)}</span>
            <span class="space"></span>${caret()}
          </div>
        </div>
        <div class="foot"><a href="#help">Properties help</a><button disabled>Apply</button></div>
      </div>
      <div class="bar"><h2>Project Browser - Grid levels.rvt</h2><button aria-label="Close project browser">${glyph("x")}</button></div>
      <ul class="tree">
        ${nodes.map((n, i) => html`<li class="node">${this.guide(n, i === 0)}${n.level === 0 ? html`<span class="pic">${glyph("views")}</span>` : nothing}<span class=${classMap({ label: true, sel: !!n.selected, cur: !!n.current })}>${n.label}</span></li>`)}
      </ul>`;
  }
}

@customElement("revit-window")
class RevitWindow extends LitElement {
  @property() view = "plan";
  @property() document = "";

  static styles = [reset, css`
    :host { display: block; }
    .work { display: grid; grid-template-columns: 227px minmax(0, 1fr) 16px 2px; background: #f0f0f0; }
    .canvas { position: relative; background: #fff; border: 2px solid #747474; border-width: 2px 0 0 2px; }
    .sheet { position: absolute; inset: 0; width: 100%; height: 100%; }
    .thin { fill: none; stroke: #000; stroke-width: 1; }
    .plan-dash { stroke-dasharray: 15 4 2.700 4; }
    .row-dash { stroke-dasharray: 15.200 4 2.700 3.900; }
    .level-dash { stroke-dasharray: 20.300 5 5 5; }
    .column-dash { stroke-dasharray: 20 5 5 5; }
    .mark { fill: none; stroke: #ed1c24; stroke-width: 3; }
    text { font-family: "Liberation Sans", Arial, sans-serif; }
    .small { font-size: 15px; } .big { font-size: 21px; } .level { font-size: 14px; } .marker { font-size: 9px; font-weight: 700; }
    .head { fill: #fff; stroke: #0039c6; } .fill { fill: #0039c6; }
    .doc { position: absolute; top: 7px; right: 4px; display: flex; gap: 6px; }
    .nav { position: absolute; top: 28px; right: 1px; width: 36px; height: 119px; border: 2px solid #bdbdbd; border-radius: 5px; background: #f4f4f4; display: flex; flex-direction: column; align-items: center; }
    .nav button { flex: none; }
    .nav .edge { align-self: flex-end; margin: 2px 2px 0 0; }
    .nav .edge.end { margin-top: 5px; }
    .nav .wheel { margin: 9px 0 0 2px; }
    .nav .drop { height: 11px; opacity: .7; }
    .nav .drop.low { margin-top: 4px; }
    .nav hr { width: 26px; border: 0; border-top: 1px solid #c0c0c0; margin: 0 0 8px; }
    .vscroll { border-top: 2px solid #747474; display: flex; flex-direction: column; align-items: center; padding-top: 8px; background: #efefef; }
    .grip { width: 15px; height: 15px; margin-top: 395px; border: 1px solid #8f8f8f; border-radius: 2px; background: linear-gradient(90deg, #fafafa, #cfcfcf); }
    .rim { background: #a0a0a0; margin-left: 1px; }
  `];

  render() {
    const plan = this.view === "plan";
    return html`
      <revit-header .document=${this.document}></revit-header>
      <div class="work">
        <revit-sidebar .view=${this.view}></revit-sidebar>
        <main class="canvas">
          <svg class="sheet" role="img" aria-label=${this.document}>
            <g transform="translate(-229 -168)">${plan ? planDrawing() : elevationDrawing()}</g>
          </svg>
          <div class="doc">
            <button aria-label="Minimize view">${glyph("docMin")}</button><button aria-label="Restore view">${glyph("docRestore")}</button><button aria-label="Close view">${glyph("docClose")}</button>
          </div>
          <div class="nav">
            <button class="edge" aria-label="Close navigation bar">${glyph("navClose")}</button>
            <button class="wheel" aria-label="Steering wheel">${glyph("wheel")}</button>
            <button class="drop" aria-label="Wheel options">${caret()}</button>
            <hr />
            <button aria-label="Zoom in region">${glyph("zoom")}</button>
            <button class="drop low" aria-label="Zoom options">${caret()}</button>
            <button class="edge end" aria-label="Navigation options">${glyph("navMenu")}</button>
          </div>
        </main>
        <div class="vscroll">${icon(7, 4, svg`<path d="M0 4H7L3.500 0Z" fill="#333"/>`)}<span class="grip"></span></div>
        <span class="rim"></span>
      </div>`;
  }
}

@customElement("app-root")
class AppRoot extends LitElement {
  static styles = css`
    :host { display: block; overflow: hidden; background: #d4d8dc; }
    .front { margin: 0 -2px 0 2px; }
  `;

  render() {
    return html`
      <revit-window view="plan" document="Grid levels.rvt - Structural Plan: Level 2"></revit-window>
      <revit-window class="front" view="elevation" document="Grid levels.rvt - Elevation: South"></revit-window>`;
  }
}
